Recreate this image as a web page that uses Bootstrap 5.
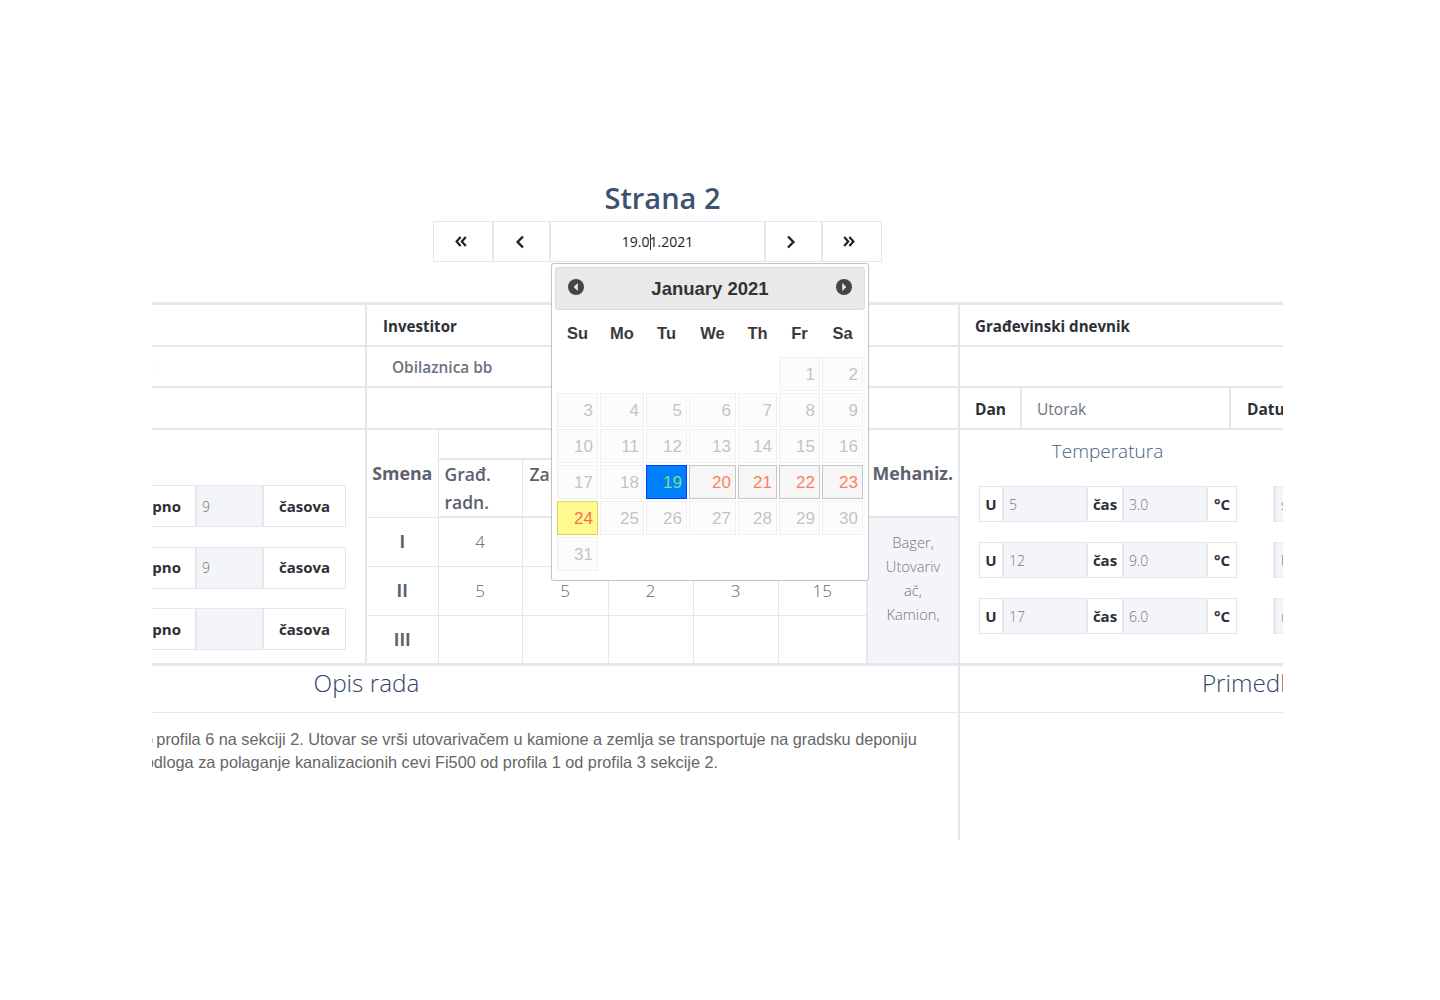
<!DOCTYPE html>
<html lang="sr">
<head>
<meta charset="utf-8">
<title>Strana 2</title>
<link href="https://cdn.jsdelivr.net/npm/bootstrap@5.3.0/dist/css/bootstrap.min.css" rel="stylesheet">
<style>
:root{--ln:#e4e7ee;--fill:#f4f5f8;--ink:#333a42;--mut:#6c7480;}
html,body{background:#fff;height:1000px;overflow:hidden;}
body{font-family:"Open Sans","Noto Sans",sans-serif;color:var(--ink);}
.stage{position:relative;width:1440px;height:1000px;padding-top:175px;}
.ttl{width:1021px;margin:0 0 0 152px;font-size:29px;line-height:46px;font-weight:600;color:#3d5170;text-align:center;}
.pager{margin-left:433px;width:449px;height:41px;flex-wrap:nowrap;}
.pager .pbtn{height:41px;border:1px solid var(--ln);border-radius:0;background:#fff;padding:0;display:flex;align-items:center;justify-content:center;margin-left:0!important;color:#222;}
.pw1{width:60px;padding-right:4px!important;}.pw2{width:57px;padding-right:3px!important;}.pw3{width:215px;font-size:14px;color:#555;}.pw4{width:57px;padding-right:6px!important;}.pw5{width:60px;padding-right:6px!important;}
.caret-bar{display:inline-block;width:1px;height:16px;background:#333;vertical-align:-3px;margin:0 -1px 0 0;}
.clipbox{width:1131px;height:538px;margin:40px 0 0 152px;overflow:hidden;}
.sheet{display:grid;grid-template-columns:592px 593px 590px;grid-template-rows:42px 41px 42px 236px 174px;margin-left:-377px;width:1775px;border-top:3px solid var(--ln);}
.cl{border-right:2px solid var(--ln);border-bottom:2px solid var(--ln);min-width:0;}
.cl3{border-right:0;}
.lbl{font-size:15.1px;font-weight:700;color:#2c3036;padding:3px 0 0 16px;display:flex;align-items:center;height:100%;}
.cl3 .lbl{padding-left:15px;}
.addr{font-size:15.4px;font-weight:600;color:var(--mut);padding:2px 0 0 25px;display:flex;align-items:center;height:100%;}
.speck{font-size:14.5px;color:var(--mut);justify-content:flex-end;padding-right:212px;display:flex;align-items:center;height:100%;}
.daycell{border-right:2px solid var(--ln);display:flex;align-items:center;height:100%;font-size:15.5px;padding-top:3px;}
.dc1{width:62px;font-weight:700;padding-left:15px;color:#2c3036;}
.dc2{width:209px;padding-left:15px;color:var(--mut);}
.dc3{border-right:0;width:200px;font-weight:700;padding-left:16px;color:#2c3036;}
.rowbig{border-bottom-width:3px;}
.leftcol{display:flex;flex-direction:column;align-items:flex-end;padding:55px 19px 0 0;}
.grp{flex:none;height:42px;flex-wrap:nowrap;border:1px solid var(--ln);margin-bottom:19.5px;width:270px;}
.grp .input-group-text{background:#fff;border:0;border-radius:0;font-size:15px;font-weight:700;color:#2c3036;padding:0;justify-content:center;height:100%;margin-left:0!important;}
.grp .form-control{background:var(--fill);border:0;border-left:2px solid var(--ln);border-right:2px solid var(--ln);border-radius:0;font-size:14px;font-weight:300;color:#777;padding:0 0 0 5px;height:100%;margin-left:0!important;box-shadow:none;}
.g-a{width:118px;justify-content:flex-end!important;padding-right:14px!important;}
.g-b{width:69px!important;flex:none!important;}
.g-c{width:81px;}
.work{width:591px;height:233px;table-layout:fixed;border-collapse:collapse;}
.work th,.work td{border:1px solid var(--ln);padding:0;text-align:center;font-size:17px;color:#666;font-weight:300;}
.work tr>*:first-child{border-left:0;}
.work tr>*:last-child{border-right:0;}
.work tr:first-child>*{border-top:0;}
.work tr:last-child>*{border-bottom:0;}
.work .hd{font-size:17.8px;font-weight:700;color:#5b626d;vertical-align:middle;}
.work .sub{text-align:left;vertical-align:top;padding:0 0 0 6px;font-size:17.5px;font-weight:600;line-height:28px;color:#5b626d;border-bottom-width:2px;border-top-width:2px;}
.work .sub2{padding-left:7px;}
.work .rm{font-weight:700;color:#5b626d;}
.r0{height:29px;}.r1{height:57px;}.r2{height:49px;}.r3{height:49px;}.r4{height:49px;}
.work .mech{background:var(--fill);border:2px solid var(--ln);vertical-align:top;font-size:14.7px;line-height:24px;padding:12px 0 0;color:#777;}
.c-smena{width:71px;}.c-a{width:84px;}.c-b{width:86px;}.c-c{width:85px;}.c-d{width:85px;}.c-e{width:89px;}.c-f{width:91px;}
.temp{color:#4b5f80;font-size:19px;font-weight:300;line-height:25px;text-align:center;width:295px;padding-top:9px;}
.trow{display:flex;padding-left:19px;gap:36px;margin-bottom:20px;height:36px;}
.trows{padding-top:22px;}
.tgrp{width:258px;height:36px;flex:none;flex-wrap:nowrap;border:1px solid var(--ln);}
.tgrp .input-group-text{background:#fff;border:0;border-radius:0;font-size:15px;font-weight:700;color:#2c3036;padding:0;justify-content:center;height:100%;flex:none;margin-left:0!important;}
.tgrp .form-control{background:var(--fill);border:0;border-left:2px solid var(--ln);border-right:2px solid var(--ln);border-radius:0;font-size:14px;font-weight:300;color:#777;padding:0 0 0 5px;height:100%;flex:none;margin-left:0!important;}
.t1{width:22px;}.t2{width:86px!important;}.t3{width:34px;}.t4{width:86px!important;}.t5{width:28px;}
.tgrp2{width:200px;}
.tgrp2 .form-control{width:198px!important;padding-left:5px;}
.sect{font-size:24.3px;font-weight:300;color:#2f4468;text-align:center;line-height:33px;height:47px;border-bottom:1px solid var(--ln);}
.bottom-l{grid-column:1 / span 2;border-bottom:0;}
.bottom-r{border-right:0;border-bottom:0;border-left:2px solid var(--ln);margin-left:-2px;}
.prose{font-family:"Liberation Sans",Arial,sans-serif;font-size:16.28px;line-height:23px;color:#666;padding-top:15px;white-space:nowrap;}
.pl1{margin-left:360px;}.pl2{margin-left:311px;}
/* datepicker */
.dp{position:absolute;left:551px;top:263px;width:318px;height:318px;background:#fff;border:1px solid #c5c5c5;border-radius:3px;padding:3px;font-family:"Liberation Sans",Arial,sans-serif;box-shadow:0 0 1px rgba(0,0,0,.1);}
.dp-h{height:43px;background:#e9e9e9;border:1px solid #ddd;border-radius:3px;display:flex;align-items:center;justify-content:space-between;padding:0 12px 4px 12px;color:#333;font-weight:700;font-size:18.5px;}
.dp-h svg{display:block;}
.dp-title{padding-top:4px;}
.dp-t{border-collapse:separate;border-spacing:2px;table-layout:fixed;margin:2px 0 0 0;width:310px;}
.dp-t th{font-size:16.5px;font-weight:700;color:#3a3a3a;text-align:center;height:41px;padding:0 0 2px;}
.dp-t td{height:34px;padding:0 4px 0 0;text-align:right;font-size:17px;line-height:1;}
.off{background:#fcfcfc;border:1px solid #f0f0f0;color:#c4c4c4;}
.on{background:#f6f6f6;border:1px solid #c5c5c5;color:#fc7f5e;}
.sel{background:#007fff;border:1px solid #003eff;color:#7be07b;}
.now{background:#fffa90;border:1px solid #dad55e;color:#fb6e4a;}
.d1{width:41px;}.d2{width:44px;}.d3{width:41px;}.d4{width:47px;}.d5{width:39px;}.d6{width:41px;}.d7{width:41px;}
</style>
</head>
<body>
<div class="stage">
  <h1 class="ttl mb-0">Strana 2</h1>
  <div class="input-group pager">
    <button class="btn pbtn pw1" type="button" aria-label="first"><svg width="12" height="11" viewBox="0 0 12 11" fill="none" stroke="#222" stroke-width="2.2"><path d="M5.6 1 1.6 5.5l4 4.5M10.8 1l-4 4.5 4 4.5"/></svg></button>
    <button class="btn pbtn pw2" type="button" aria-label="prev"><svg width="10" height="14" viewBox="0 0 10 14" fill="none" stroke="#222" stroke-width="2.4"><path d="M8 1.5 2.6 7 8 12.5"/></svg></button>
    <span class="pbtn pw3"><span>19.0</span><span class="caret-bar"></span><span>1.2021</span></span>
    <button class="btn pbtn pw4" type="button" aria-label="next"><svg width="10" height="14" viewBox="0 0 10 14" fill="none" stroke="#222" stroke-width="2.4"><path d="M2 1.5 7.4 7 2 12.5"/></svg></button>
    <button class="btn pbtn pw5" type="button" aria-label="last"><svg width="12" height="11" viewBox="0 0 12 11" fill="none" stroke="#222" stroke-width="2.2"><path d="M1.2 1l4 4.5-4 4.5M6.4 1l4 4.5-4 4.5"/></svg></button>
  </div>

  <div class="clipbox">
    <div class="sheet">
      <div class="cl"></div>
      <div class="cl"><div class="lbl">Investitor</div></div>
      <div class="cl cl3"><div class="lbl">Građevinski dnevnik</div></div>

      <div class="cl"><div class="speck">:</div></div>
      <div class="cl"><div class="addr">Obilaznica bb</div></div>
      <div class="cl cl3"></div>

      <div class="cl"></div>
      <div class="cl"></div>
      <div class="cl cl3 d-flex"><div class="daycell dc1">Dan</div><div class="daycell dc2">Utorak</div><div class="daycell dc3">Datum</div></div>

      <div class="cl rowbig leftcol">
        <div class="input-group grp"><span class="input-group-text g-a">Ukupno</span><input class="form-control g-b" value="9" readonly aria-label="a"><span class="input-group-text g-c">časova</span></div>
        <div class="input-group grp"><span class="input-group-text g-a">Ukupno</span><input class="form-control g-b" value="9" readonly aria-label="b"><span class="input-group-text g-c">časova</span></div>
        <div class="input-group grp"><span class="input-group-text g-a">Ukupno</span><input class="form-control g-b" value="" readonly aria-label="c"><span class="input-group-text g-c">časova</span></div>
      </div>

      <div class="cl rowbig">
        <table class="work">
          <colgroup><col class="c-smena"><col class="c-a"><col class="c-b"><col class="c-c"><col class="c-d"><col class="c-e"><col class="c-f"></colgroup>
          <tr class="r0"><th class="hd" rowspan="2">Smena</th><th colspan="5"></th><th class="hd" rowspan="2">Mehaniz.</th></tr>
          <tr class="r1"><th class="sub">Građ. radn.</th><th class="sub sub2">Zan.</th><th class="sub"></th><th class="sub"></th><th class="sub"></th></tr>
          <tr class="r2"><td class="rm">I</td><td>4</td><td>4</td><td>2</td><td>3</td><td>13</td><td class="mech" rowspan="3">Bager,<br>Utovariv<br>ač,<br>Kamion,</td></tr>
          <tr class="r3"><td class="rm">II</td><td>5</td><td>5</td><td>2</td><td>3</td><td>15</td></tr>
          <tr class="r4"><td class="rm">III</td><td></td><td></td><td></td><td></td><td></td></tr>
        </table>
      </div>

      <div class="cl cl3 rowbig">
        <div class="temp">Temperatura</div>
        <div class="trows">
          <div class="trow"><div class="input-group tgrp"><span class="input-group-text t1">U</span><input class="form-control t2" value="5" readonly aria-label="u1"><span class="input-group-text t3">čas</span><input class="form-control t4" value="3.0" readonly aria-label="t1"><span class="input-group-text t5">°C</span></div><div class="input-group tgrp tgrp2"><input class="form-control" value="sunčano" readonly aria-label="w1"></div></div>
          <div class="trow"><div class="input-group tgrp"><span class="input-group-text t1">U</span><input class="form-control t2" value="12" readonly aria-label="u2"><span class="input-group-text t3">čas</span><input class="form-control t4" value="9.0" readonly aria-label="t2"><span class="input-group-text t5">°C</span></div><div class="input-group tgrp tgrp2"><input class="form-control" value="bez padavina" readonly aria-label="w2"></div></div>
          <div class="trow"><div class="input-group tgrp"><span class="input-group-text t1">U</span><input class="form-control t2" value="17" readonly aria-label="u3"><span class="input-group-text t3">čas</span><input class="form-control t4" value="6.0" readonly aria-label="t3"><span class="input-group-text t5">°C</span></div><div class="input-group tgrp tgrp2"><input class="form-control" value="razvedreno" readonly aria-label="w3"></div></div>
        </div>
      </div>

      <div class="cl bottom-l">
        <div class="sect">Opis rada</div>
        <div class="prose">
          <div class="pl1">do&#8201;profila 6 na sekciji 2. Utovar se vrši utovarivačem u kamione a zemlja se transportuje na gradsku deponiju</div>
          <div class="pl2">Izrada podloga za polaganje kanalizacionih cevi Fi500 od profila 1 od profila 3 sekcije 2.</div>
        </div>
      </div>
      <div class="cl bottom-r"><div class="sect">Primedbe</div></div>
    </div>
  </div>

  <div class="dp">
    <div class="dp-h">
      <svg width="16" height="16" viewBox="0 0 16 16"><circle cx="8" cy="8" r="8" fill="#454545"/><path d="M9.8 4 5.6 8l4.2 4z" fill="#e9e9e9"/></svg>
      <span class="dp-title">January 2021</span>
      <svg width="16" height="16" viewBox="0 0 16 16"><circle cx="8" cy="8" r="8" fill="#454545"/><path d="M6.2 4l4.2 4-4.2 4z" fill="#e9e9e9"/></svg>
    </div>
    <table class="dp-t">
      <colgroup><col class="d1"><col class="d2"><col class="d3"><col class="d4"><col class="d5"><col class="d6"><col class="d7"></colgroup>
      <tr><th>Su</th><th>Mo</th><th>Tu</th><th>We</th><th>Th</th><th>Fr</th><th>Sa</th></tr>
      <tr><td></td><td></td><td></td><td></td><td></td><td class="off">1</td><td class="off">2</td></tr>
      <tr><td class="off">3</td><td class="off">4</td><td class="off">5</td><td class="off">6</td><td class="off">7</td><td class="off">8</td><td class="off">9</td></tr>
      <tr><td class="off">10</td><td class="off">11</td><td class="off">12</td><td class="off">13</td><td class="off">14</td><td class="off">15</td><td class="off">16</td></tr>
      <tr><td class="off">17</td><td class="off">18</td><td class="sel">19</td><td class="on">20</td><td class="on">21</td><td class="on">22</td><td class="on">23</td></tr>
      <tr><td class="now">24</td><td class="off">25</td><td class="off">26</td><td class="off">27</td><td class="off">28</td><td class="off">29</td><td class="off">30</td></tr>
      <tr><td class="off">31</td><td></td><td></td><td></td><td></td><td></td><td></td></tr>
    </table>
  </div>
</div>
<script src="https://cdn.jsdelivr.net/npm/bootstrap@5.3.0/dist/js/bootstrap.bundle.min.js"></script>
</body>
</html>
